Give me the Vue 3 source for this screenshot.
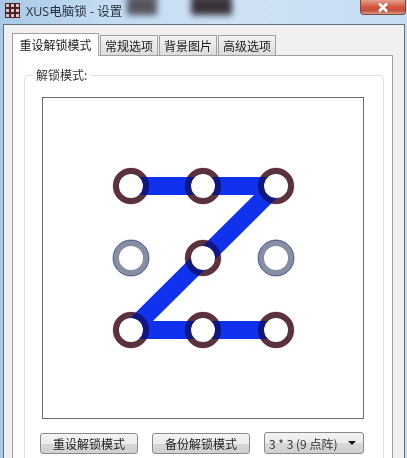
<script setup>
const W = [88, 160, 233]
const H = [88, 160, 232]
const nodes = []
const active = new Set(['0-0','1-0','2-0','1-1','0-2','1-2','2-2'])
H.forEach((y, r) => W.forEach((x, c) => nodes.push({ x, y, on: active.has(c + '-' + r) })))
const path = `M${W[0]} ${H[0]}L${W[2]} ${H[0]}L${W[0]} ${H[2]}L${W[2]} ${H[2]}`
const tabs = ['常规选项', '背景图片', '高级选项']
const dots = [0, 1, 2, 3, 4, 5, 6, 7, 8]
</script>

<template>
  <div class="window">
    <span class="ghost ghost-a"></span>
    <span class="ghost ghost-b"></span>
    <header class="titlebar">
      <div class="title">
        <span class="logo"><i v-for="d in dots" :key="d"></i></span>
        <span>XUS电脑锁 - 设置</span>
      </div>
      <button class="close">
        <svg width="14" height="11" viewBox="0 0 14 11"><path d="M3 1.5l8 8M11 1.5l-8 8" stroke="#fff" stroke-width="2.6" fill="none"/></svg>
      </button>
    </header>
    <main class="client">
      <nav class="tabs">
        <div class="tab current">重设解锁模式</div>
        <div v-for="t in tabs" :key="t" class="tab">{{ t }}</div>
      </nav>
      <section class="panel">
        <fieldset class="group">
          <legend>解锁模式:</legend>
          <div class="canvas">
            <svg width="320" height="320" viewBox="0 0 320 320">
              <path :d="path" fill="none" stroke="#0024e6" stroke-width="18" stroke-linejoin="bevel"/>
              <g v-for="(n, i) in nodes" :key="i">
                <circle :cx="n.x" :cy="n.y" r="12" fill="#fff"/>
                <circle :cx="n.x" :cy="n.y" r="18" fill="none" :stroke="n.on ? '#f0b4c0' : '#6a82bc'" stroke-width="1" class="ink"/>
                <circle :cx="n.x" :cy="n.y" r="15" fill="none" :stroke="n.on ? '#5a323e' : '#868ea4'" stroke-width="6" class="ink"/>
              </g>
              <path :d="path" fill="none" stroke="#10105c" stroke-width="18" stroke-linejoin="bevel" class="lift"/>
            </svg>
          </div>
          <div class="actions">
            <button class="btn">重设解锁模式</button>
            <button class="btn">备份解锁模式</button>
            <div class="select"><span>3 * 3 (9 点阵)</span><i class="caret"></i></div>
          </div>
        </fieldset>
      </section>
    </main>
  </div>
</template>

<style>
html, body { margin: 0; padding: 0; overflow: hidden; }
</style>

<style scoped>
.window {
  position: relative;
  width: 407px;
  height: 458px;
  overflow: hidden;
  background: linear-gradient(90deg, #a9c8e6 0, #c3dcf2 25%, #cfe2f5 60%, #c5dcf2 100%);
  font-family: "Noto Sans CJK SC", "Liberation Sans", sans-serif;
  font-size: 12px;
  color: #1a1a1a;
}
.ghost {
  position: absolute;
  top: -4px;
  height: 19px;
  background: #38333a;
  filter: blur(3px);
}
.ghost-a { left: 127px; width: 30px; opacity: .8; }
.ghost-b { left: 191px; width: 41px; }
.titlebar {
  position: relative;
  height: 24px;
  display: flex;
  justify-content: space-between;
  align-items: flex-start;
  padding-left: 5px;
  padding-right: 1px;
  box-sizing: border-box;
}
.title {
  display: flex;
  align-items: center;
  gap: 6px;
  height: 21px;
  font-family: "Open Sans", "Noto Sans CJK SC", sans-serif;
  font-size: 12.5px;
  color: #27303a;
}
.logo {
  display: grid;
  grid-template-columns: repeat(3, 3px);
  grid-auto-rows: 3px;
  gap: 2px;
  padding: 1px;
  background: #47242a;
}
.logo i { background: #e6c0c0; }
.close {
  width: 46px;
  height: 15px;
  padding: 0;
  border: 1px solid #7a4a44;
  border-top: 0;
  border-radius: 0 0 4px 4px;
  background: linear-gradient(#e2a18e 0, #d5533f 50%, #c0513f 75%, #dd9a86 100%);
  display: flex;
  align-items: center;
  justify-content: center;
}
.client {
  margin-left: 3px;
  margin-right: 2px;
  height: 434px;
  box-sizing: border-box;
  padding: 8px 11px 0 8px;
  border: 1px solid #63707e;
  border-bottom: 0;
  background: #f0f0f0;
}
.tabs {
  display: flex;
  align-items: flex-end;
  height: 22px;
  position: relative;
  z-index: 1;
}
.tab {
  box-sizing: border-box;
  width: 58px;
  height: 20px;
  text-align: center;
  line-height: 19px;
  border: 1px solid #a0a0a0;
  border-bottom: 0;
  margin-left: 1px;
  background: linear-gradient(#f3f3f3, #dcdcdc);
  white-space: nowrap;
}
.tab.current {
  height: 23px;
  width: 87px;
  margin: 0 0 -1px;
  line-height: 21px;
  background: #fff;
}
.panel {
  box-sizing: border-box;
  height: 404px;
  padding: 11px 8px 0 11px;
  border: 1px solid #a0a0a0;
  border-bottom: 0;
  background: #fff;
}
.group {
  margin: 0;
  min-width: 0;
  height: 400px;
  box-sizing: border-box;
  padding: 14px 19px 0 17px;
  border: 1px solid #e0e0e0;
  border-radius: 4px;
}
legend {
  margin-left: -9px;
  padding: 0 3px;
  line-height: 16px;
  font-size: 12px;
  color: #333;
}
.canvas {
  width: 320px;
  height: 320px;
  border: 1px solid #6d6d6d;
  background: #fff;
}
.canvas svg { display: block; }
.ink { mix-blend-mode: multiply; }
.lift { mix-blend-mode: screen; }
.actions {
  display: flex;
  align-items: center;
  margin-top: 13px;
  margin-left: -2px;
}
.btn {
  box-sizing: border-box;
  width: 98px;
  height: 21px;
  margin-right: 14px;
  padding: 0;
  border: 1px solid #8a8a8a;
  border-radius: 3px;
  background: linear-gradient(#f4f4f4 0, #ececec 50%, #d6d6d6 51%, #d0d0d0 100%);
  font: inherit;
  color: #1a1a1a;
  line-height: 19px;
}
.select {
  box-sizing: border-box;
  width: 100px;
  height: 22px;
  padding: 0 7px 0 4px;
  display: flex;
  align-items: center;
  justify-content: space-between;
  border: 1px solid #8a8a8a;
  border-radius: 3px;
  background: linear-gradient(#f2f2f2 0, #ebebeb 50%, #d8d8d8 51%, #cfcfcf 100%);
  color: #333;
  font-size: 12px;
  white-space: nowrap;
}
.caret {
  width: 0;
  height: 0;
  border: 4px solid transparent;
  border-top: 4px solid #111;
  border-bottom: 0;
}
</style>
